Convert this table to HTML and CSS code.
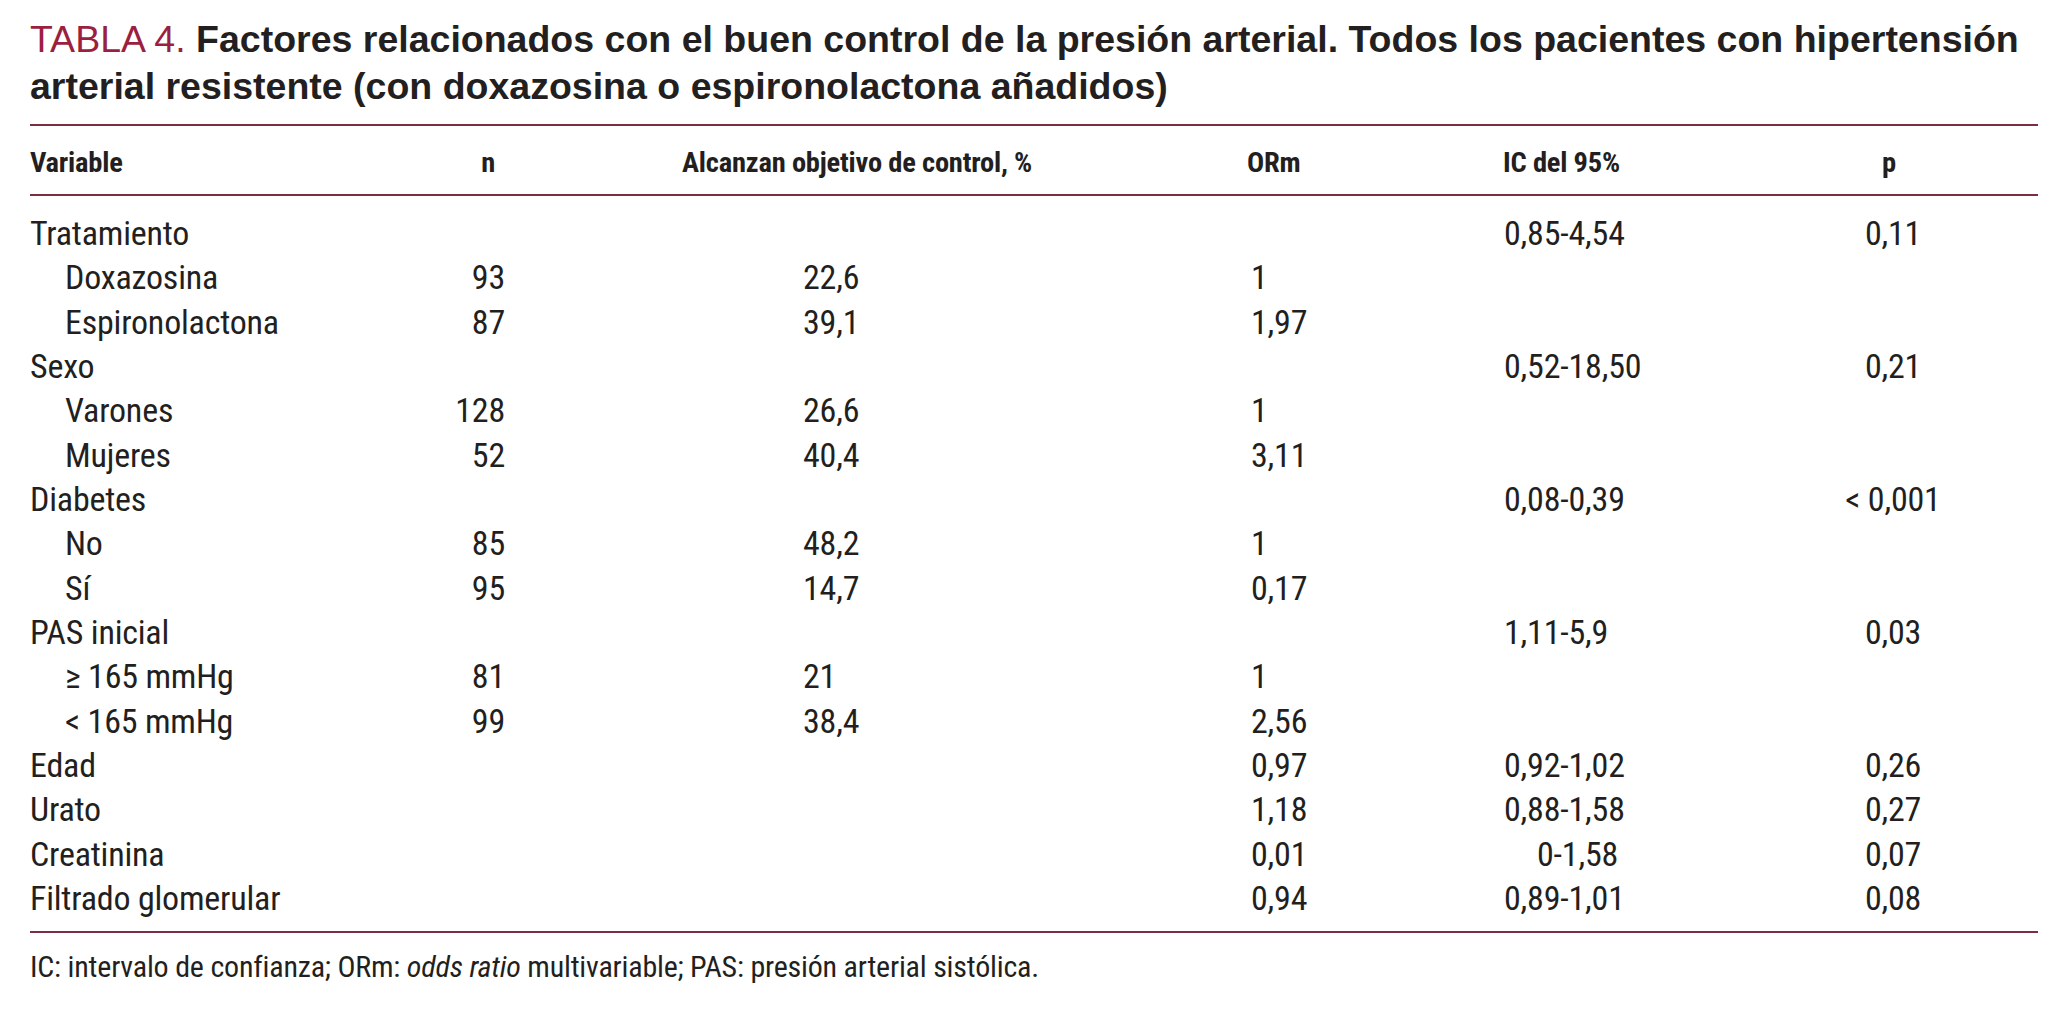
FILE: index.html
```html
<!DOCTYPE html>
<html lang="es">
<head>
<meta charset="utf-8">
<title>Tabla 4</title>
<link rel="stylesheet" href="styles.css">
</head>
<body>
<main class="page">
  <h1 class="title"><span class="label">TABLA 4.</span> <b>Factores relacionados con el buen control de la presión arterial. Todos los pacientes con hipertensión</b><br><b>arterial resistente (con doxazosina o espironolactona añadidos)</b></h1>
  <div class="table">
    <div class="row head">
      <div class="c-var">Variable</div>
      <div class="c-n">n</div>
      <div class="c-pct">Alcanzan objetivo de control, %</div>
      <div class="c-or">ORm</div>
      <div class="c-ic">IC del 95%</div>
      <div class="c-p">p</div>
    </div>
    <div class="body">
      <div class="row"><div class="c-var">Tratamiento</div><div class="c-n"></div><div class="c-pct"></div><div class="c-or"></div><div class="c-ic">0,85-4,54</div><div class="c-p">0,11</div></div>
      <div class="row"><div class="c-var sub">Doxazosina</div><div class="c-n">93</div><div class="c-pct">22,6</div><div class="c-or">1</div><div class="c-ic"></div><div class="c-p"></div></div>
      <div class="row"><div class="c-var sub">Espironolactona</div><div class="c-n">87</div><div class="c-pct">39,1</div><div class="c-or">1,97</div><div class="c-ic"></div><div class="c-p"></div></div>
      <div class="row"><div class="c-var">Sexo</div><div class="c-n"></div><div class="c-pct"></div><div class="c-or"></div><div class="c-ic">0,52-18,50</div><div class="c-p">0,21</div></div>
      <div class="row"><div class="c-var sub">Varones</div><div class="c-n">128</div><div class="c-pct">26,6</div><div class="c-or">1</div><div class="c-ic"></div><div class="c-p"></div></div>
      <div class="row"><div class="c-var sub">Mujeres</div><div class="c-n">52</div><div class="c-pct">40,4</div><div class="c-or">3,11</div><div class="c-ic"></div><div class="c-p"></div></div>
      <div class="row"><div class="c-var">Diabetes</div><div class="c-n"></div><div class="c-pct"></div><div class="c-or"></div><div class="c-ic">0,08-0,39</div><div class="c-p">&lt; 0,001</div></div>
      <div class="row"><div class="c-var sub">No</div><div class="c-n">85</div><div class="c-pct">48,2</div><div class="c-or">1</div><div class="c-ic"></div><div class="c-p"></div></div>
      <div class="row"><div class="c-var sub">Sí</div><div class="c-n">95</div><div class="c-pct">14,7</div><div class="c-or">0,17</div><div class="c-ic"></div><div class="c-p"></div></div>
      <div class="row"><div class="c-var">PAS inicial</div><div class="c-n"></div><div class="c-pct"></div><div class="c-or"></div><div class="c-ic">1,11-5,9</div><div class="c-p">0,03</div></div>
      <div class="row"><div class="c-var sub">≥ 165 mmHg</div><div class="c-n">81</div><div class="c-pct">21</div><div class="c-or">1</div><div class="c-ic"></div><div class="c-p"></div></div>
      <div class="row"><div class="c-var sub">&lt; 165 mmHg</div><div class="c-n">99</div><div class="c-pct">38,4</div><div class="c-or">2,56</div><div class="c-ic"></div><div class="c-p"></div></div>
      <div class="row"><div class="c-var">Edad</div><div class="c-n"></div><div class="c-pct"></div><div class="c-or">0,97</div><div class="c-ic">0,92-1,02</div><div class="c-p">0,26</div></div>
      <div class="row"><div class="c-var">Urato</div><div class="c-n"></div><div class="c-pct"></div><div class="c-or">1,18</div><div class="c-ic">0,88-1,58</div><div class="c-p">0,27</div></div>
      <div class="row"><div class="c-var">Creatinina</div><div class="c-n"></div><div class="c-pct"></div><div class="c-or">0,01</div><div class="c-ic shift">0-1,58</div><div class="c-p">0,07</div></div>
      <div class="row"><div class="c-var">Filtrado glomerular</div><div class="c-n"></div><div class="c-pct"></div><div class="c-or">0,94</div><div class="c-ic">0,89-1,01</div><div class="c-p">0,08</div></div>
    </div>
  </div>
  <p class="note">IC: intervalo de confianza; ORm: <i>odds ratio</i> multivariable; PAS: presión arterial sistólica.</p>
</main>
</body>
</html>
```
FILE: styles.css
```css
html, body {
  margin: 0;
  padding: 0;
  background: #ffffff;
}

.page {
  width: 2008px;
  padding: 16px 0 0 30px;
  color: #231f20;
}

.title {
  margin: 0;
  font-family: "Liberation Sans", Arial, sans-serif;
  font-size: 37.5px;
  line-height: 47px;
  font-weight: 400;
  white-space: nowrap;
  color: #231f20;
}

.title .label {
  color: #9b1f41;
}

.title b {
  font-weight: 700;
}

.table {
  margin-top: 14px;
  border-top: 2px solid #7c2d44;
  border-bottom: 2px solid #7c2d44;
  font-family: "Roboto Condensed", "Liberation Sans", Arial, sans-serif;
}

.row {
  display: grid;
  grid-template-columns: 390px 85px 742px 256px 237px 298px;
  align-items: center;
}

.head {
  height: 70px;
  box-sizing: border-box;
  padding-top: 4px;
  border-bottom: 2px solid #7c2d44;
  font-size: 28.5px;
  font-weight: 700;
  letter-spacing: -0.2px;
}

.head .c-n {
  padding-right: 10px;
}

.head .c-pct {
  padding-left: 177px;
}

.head .c-or,
.head .c-ic {
  padding-left: 0;
}

.head .c-p {
  padding-left: 0;
}

.body {
  padding: 15px 0 11px;
  font-size: 34px;
  letter-spacing: -0.2px;
}

.body .row {
  height: 44.33px;
  line-height: 44.33px;
}

.c-var {
  text-align: left;
  white-space: nowrap;
}

.c-var.sub {
  padding-left: 35px;
}

.c-n {
  text-align: right;
}

.c-pct {
  padding-left: 298px;
}

.c-or {
  padding-left: 4px;
}

.c-ic {
  padding-left: 1px;
  white-space: nowrap;
}

.c-ic.shift {
  padding-left: 34px;
}

.c-p {
  text-align: center;
  white-space: nowrap;
  padding-left: 8px;
}

.note {
  margin: 18px 0 0;
  font-family: "Roboto Condensed", "Liberation Sans", Arial, sans-serif;
  font-size: 30px;
  line-height: 32px;
  letter-spacing: -0.2px;
}
```
